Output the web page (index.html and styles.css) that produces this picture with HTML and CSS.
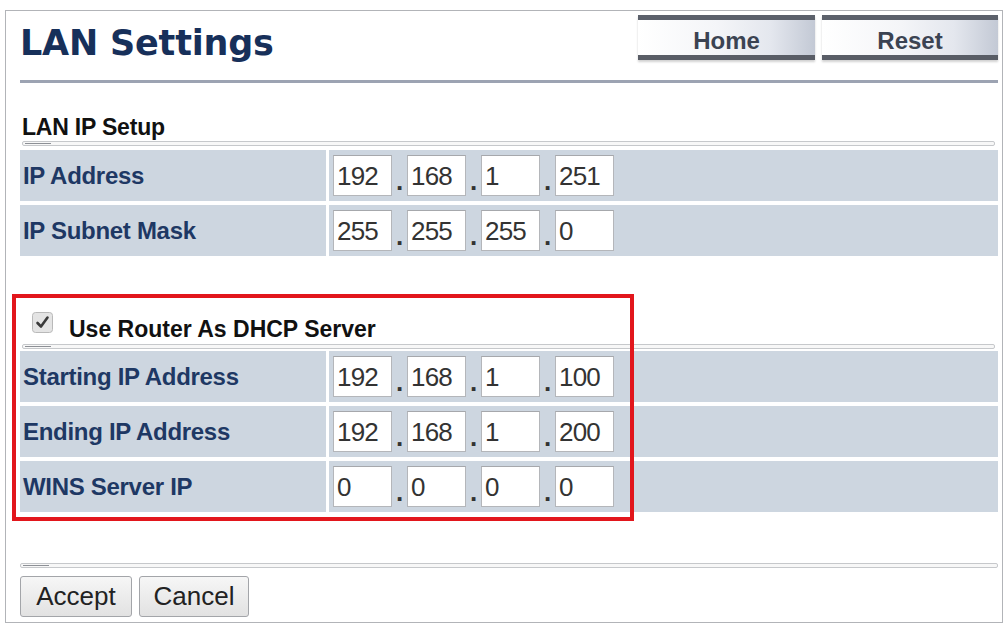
FILE: index.html
```html
<!DOCTYPE html>
<html lang="en">
<head>
<meta charset="utf-8">
<title>LAN Settings</title>
<link rel="stylesheet" href="styles.css">
</head>
<body>
<div class="frame">
  <header class="top">
    <h1 class="title">LAN Settings</h1>
    <nav class="nav">
      <a class="navbtn navbtn-home">Home</a>
      <a class="navbtn navbtn-reset">Reset</a>
    </nav>
  </header>

  <section class="group group-lan">
    <h2 class="group-title">LAN IP Setup</h2>
    <div class="rule"></div>
    <div class="grid">
      <div class="lbl">IP Address</div>
      <div class="val">
        <input class="oct" value="192"><span class="dot">.</span><input class="oct" value="168"><span class="dot">.</span><input class="oct" value="1"><span class="dot">.</span><input class="oct" value="251">
      </div>
      <div class="lbl">IP Subnet Mask</div>
      <div class="val">
        <input class="oct" value="255"><span class="dot">.</span><input class="oct" value="255"><span class="dot">.</span><input class="oct" value="255"><span class="dot">.</span><input class="oct" value="0">
      </div>
    </div>
  </section>

  <section class="group group-dhcp">
    <div class="check-title">
      <span class="checkbox"><svg width="21" height="21" viewBox="0 0 21 21"><rect x="0.5" y="0.5" width="20" height="20" rx="3" fill="#e4e4e4" stroke="#b9b9b9"/><path d="M5.5 11 L9 14.5 L15.5 5.5" fill="none" stroke="#3a3a3a" stroke-width="2.6" stroke-linecap="round" stroke-linejoin="round"/></svg></span>
      <span class="check-text">Use Router As DHCP Server</span>
    </div>
    <div class="rule rule-dhcp"></div>
    <div class="grid">
      <div class="lbl">Starting IP Address</div>
      <div class="val">
        <input class="oct" value="192"><span class="dot">.</span><input class="oct" value="168"><span class="dot">.</span><input class="oct" value="1"><span class="dot">.</span><input class="oct" value="100">
      </div>
      <div class="lbl">Ending IP Address</div>
      <div class="val">
        <input class="oct" value="192"><span class="dot">.</span><input class="oct" value="168"><span class="dot">.</span><input class="oct" value="1"><span class="dot">.</span><input class="oct" value="200">
      </div>
      <div class="lbl">WINS Server IP</div>
      <div class="val">
        <input class="oct" value="0"><span class="dot">.</span><input class="oct" value="0"><span class="dot">.</span><input class="oct" value="0"><span class="dot">.</span><input class="oct" value="0">
      </div>
    </div>
  </section>

  <div class="rule rule-bottom"></div>
  <div class="actions">
    <button class="btn btn-accept">Accept</button>
    <button class="btn btn-cancel">Cancel</button>
  </div>

  <div class="highlight"></div>
</div>
</body>
</html>
```

FILE: styles.css
```css
* { box-sizing: border-box; }

html, body {
  margin: 0;
  padding: 0;
  background: #ffffff;
}

body {
  font-family: "Liberation Sans", Arial, sans-serif;
  width: 1006px;
  height: 626px;
  overflow: hidden;
}

.frame {
  position: relative;
  margin: 10px 0 0 5px;
  width: 998px;
  height: 613px;
  border: 1px solid #b2b4b8;
  padding: 0 4px 0 14px;
}

/* header */
.top {
  display: flex;
  justify-content: space-between;
  align-items: flex-start;
  height: 72px;
  border-bottom: 3px solid #9ca3b2;
}

.title {
  margin: 0;
  padding-top: 12px;
  font-family: "DejaVu Sans", Verdana, sans-serif;
  font-weight: bold;
  font-size: 35px;
  line-height: 41px;
  color: #17305a;
  letter-spacing: -0.2px;
}

.nav {
  display: flex;
  gap: 7px;
  margin-top: 4px;
}

.navbtn {
  display: flex;
  align-items: center;
  justify-content: center;
  height: 45px;
  border-top: 5px solid #5c616b;
  border-bottom: 5px solid #595d66;
  background: linear-gradient(to right, #ffffff 0%, #f4f5f8 45%, #e4e7ee 75%, #c3c9d5 100%);
  box-shadow: 0 2px 2px rgba(0, 0, 0, 0.18);
  font-weight: bold;
  font-size: 24px;
  color: #3b4352;
  padding-top: 6px;
}

.navbtn-home { width: 177px; }
.navbtn-reset { width: 176px; }

/* groups */
.group-title {
  margin: 31px 0 0 2px;
  font-size: 23px;
  line-height: 26px;
  font-weight: bold;
  color: #111111;
  letter-spacing: -0.2px;
}

.rule {
  position: relative;
  height: 5px;
  margin: 1px 3px 4px 2px;
  border: 1px solid #c6c8cb;
  border-radius: 2px;
  background: #f7f7f7;
}

.rule::before {
  content: "";
  position: absolute;
  left: 2px;
  top: 1px;
  width: 26px;
  height: 1px;
  background: #8d9096;
}

.grid {
  display: grid;
  grid-template-columns: 306px 1fr;
  column-gap: 3px;
  row-gap: 4px;
}

.lbl {
  display: flex;
  align-items: center;
  height: 51px;
  padding-left: 3px;
  background: #cdd6e0;
  color: #1e3864;
  font-weight: bold;
  font-size: 24px;
  letter-spacing: -0.3px;
}

.val {
  display: flex;
  align-items: center;
  height: 51px;
  padding-left: 4px;
  background: #cdd6e0;
}

.oct {
  width: 59px;
  height: 41px;
  margin: 0;
  padding: 2px 0 0 3px;
  border: 1px solid #b4b6ba;
  border-top-color: #a6a8ac;
  background: #ffffff;
  font-family: "Liberation Sans", Arial, sans-serif;
  font-size: 26px;
  color: #333333;
  letter-spacing: -0.8px;
  outline: none;
}

.dot {
  width: 15px;
  text-align: center;
  align-self: flex-end;
  padding-bottom: 10px;
  font-size: 26px;
  font-weight: bold;
  line-height: 20px;
  color: #333333;
}

/* dhcp */
.check-title {
  display: flex;
  align-items: flex-start;
  height: 26px;
  margin-top: 60px;
  padding-left: 12px;
}

.checkbox {
  display: block;
  width: 21px;
  height: 21px;
  margin-top: -4px;
}

.checkbox svg { display: block; }

.check-text {
  margin-left: 16px;
  font-size: 23px;
  line-height: 26px;
  font-weight: bold;
  color: #111111;
}

.rule-dhcp {
  margin-top: 2px;
  margin-bottom: 2px;
}

.rule-bottom {
  margin: 51px 0 8px 0;
}

/* actions */
.actions {
  display: flex;
  gap: 7px;
}

.btn {
  height: 41px;
  padding: 0;
  border: 1px solid #a3a5a9;
  border-radius: 3px;
  background: linear-gradient(#f6f6f6, #e2e2e2);
  font-family: "Liberation Sans", Arial, sans-serif;
  font-size: 26px;
  color: #222222;
}

.btn-accept { width: 112px; }
.btn-cancel { width: 110px; }

/* red annotation box */
.highlight {
  position: absolute;
  left: 6px;
  top: 283px;
  width: 622px;
  height: 227px;
  border: 4px solid #e2161c;
  pointer-events: none;
}
```
